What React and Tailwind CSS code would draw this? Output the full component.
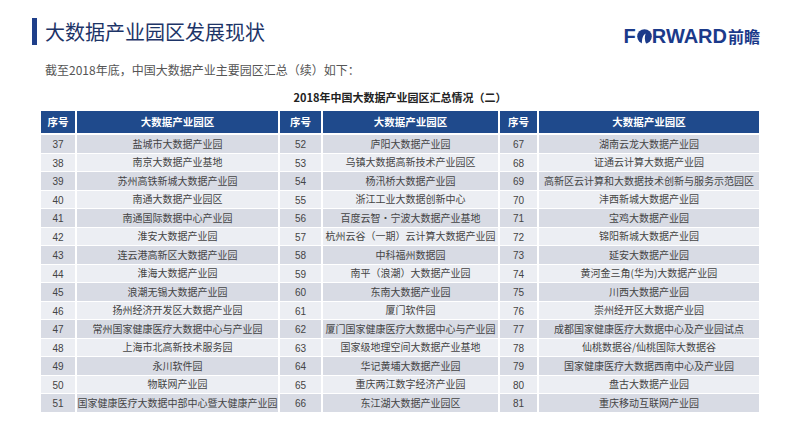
import React from 'react';

const rows = [
  ['37', '盐城市大数据产业园', '52', '庐阳大数据产业园', '67', '湖南云龙大数据产业园'],
  ['38', '南京大数据产业基地', '53', '乌镇大数据高新技术产业园区', '68', '证通云计算大数据产业园'],
  ['39', '苏州高铁新城大数据产业园', '54', '杨汛桥大数据产业园', '69', '高新区云计算和大数据技术创新与服务示范园区'],
  ['40', '南通大数据产业园区', '55', '浙江工业大数据创新中心', '70', '沣西新城大数据产业园'],
  ['41', '南通国际数据中心产业园', '56', '百度云智・宁波大数据产业基地', '71', '宝鸡大数据产业园'],
  ['42', '淮安大数据产业园', '57', '杭州云谷（一期）云计算大数据产业园', '72', '锦阳新城大数据产业园'],
  ['43', '连云港高新区大数据产业园', '58', '中科福州数据园', '73', '延安大数据产业园'],
  ['44', '淮海大数据产业园', '59', '南平（浪潮）大数据产业园', '74', '黄河金三角(华为)大数据产业园'],
  ['45', '浪潮无锡大数据产业园', '60', '东南大数据产业园', '75', '川西大数据产业园'],
  ['46', '扬州经济开发区大数据产业园', '61', '厦门软件园', '76', '崇州经开区大数据产业园'],
  ['47', '常州国家健康医疗大数据中心与产业园', '62', '厦门国家健康医疗大数据中心与产业园', '77', '成都国家健康医疗大数据中心及产业园试点'],
  ['48', '上海市北高新技术服务园', '63', '国家级地理空间大数据产业基地', '78', '仙桃数据谷/仙桃国际大数据谷'],
  ['49', '永川软件园', '64', '华记黄埔大数据产业园', '79', '国家健康医疗大数据西南中心及产业园'],
  ['50', '物联网产业园', '65', '重庆两江数字经济产业园', '80', '盘古大数据产业园'],
  ['51', '国家健康医疗大数据中部中心暨大健康产业园', '66', '东江湖大数据产业园区', '81', '重庆移动互联网产业园'],
];

const headers = ['序号', '大数据产业园区', '序号', '大数据产业园区', '序号', '大数据产业园区'];

function Logo() {
  return (
    <div className="flex items-center text-[#1b3a8a] font-bold leading-none" style={{ fontFamily: '"Liberation Sans", Arial, sans-serif' }}>
      <span className="text-[20px]">F</span>
      <svg width="15" height="15" viewBox="0 0 16 16" className="ml-[1px]">
        <circle cx="8" cy="8" r="7.8" fill="#1b3a8a" />
        <path d="M5.2 16 C5.2 10 6.4 6.4 9.2 4.8 C8 8 8 12 9.8 16 Z" fill="#fff" />
      </svg>
      <span className="text-[20px] font-semibold">RWARD</span>
      <span className="text-[16px] font-bold ml-[1px]" style={{ fontFamily: '"Noto Sans CJK SC", sans-serif' }}>前瞻</span>
    </div>
  );
}

function App() {
  return (
    <div className="w-[800px] h-[440px] bg-white relative overflow-hidden" style={{ fontFamily: '"Noto Sans CJK SC", "Noto Sans", sans-serif' }}>
      <div className="flex items-start justify-between pl-[32px] pr-[40px] pt-[18px]">
        <div className="flex items-center h-[27px]">
          <div className="w-[5px] h-[27px] bg-[#1f3f8a]" />
          <h1 className="ml-[8px] text-[20px] leading-none text-[#1d3467]">大数据产业园区发展现状</h1>
        </div>
        <div className="pt-[8px]">
          <Logo />
        </div>
      </div>

      <p className="ml-[45px] mt-[18px] text-[12px] leading-none text-[#555]">截至2018年底，中国大数据产业主要园区汇总（续）如下：</p>

      <p className="mt-[16px] text-center text-[11px] font-bold leading-none text-[#222]">2018年中国大数据产业园区汇总情况（二）</p>

      <div className="ml-[41px] mt-[8px] w-[718px]">
        <div className="grid grid-cols-[34px_201px_41px_175px_37px_220px] gap-x-[2px] h-[22px]">
          {headers.map((h, i) => (
            <div key={i} className="bg-[#1f4a8c] text-white text-[10.5px] font-bold flex items-center justify-center">
              {h}
            </div>
          ))}
        </div>
        <div className="mt-[2px] flex flex-col gap-y-px">
          {rows.map((r, ri) => (
            <div
              key={ri}
              className="grid grid-cols-[34px_201px_41px_175px_37px_220px] gap-x-[2px] h-[17.5px] text-[10px] text-[#444]"
            >
              {r.map((c, ci) => (
                <div
                  key={ci}
                  className={`flex items-center justify-center whitespace-nowrap leading-none ${ci % 2 === 0 ? 'pt-[3px]' : ''} ${ri % 2 === 0 ? 'bg-[#d8dbe4]' : 'bg-[#eceef3]'}`}
                  style={ci % 2 === 0 ? { fontFamily: '"Liberation Sans", Arial, sans-serif' } : undefined}
                >
                  {c}
                </div>
              ))}
            </div>
          ))}
        </div>
      </div>
    </div>
  );
}

export default App;
